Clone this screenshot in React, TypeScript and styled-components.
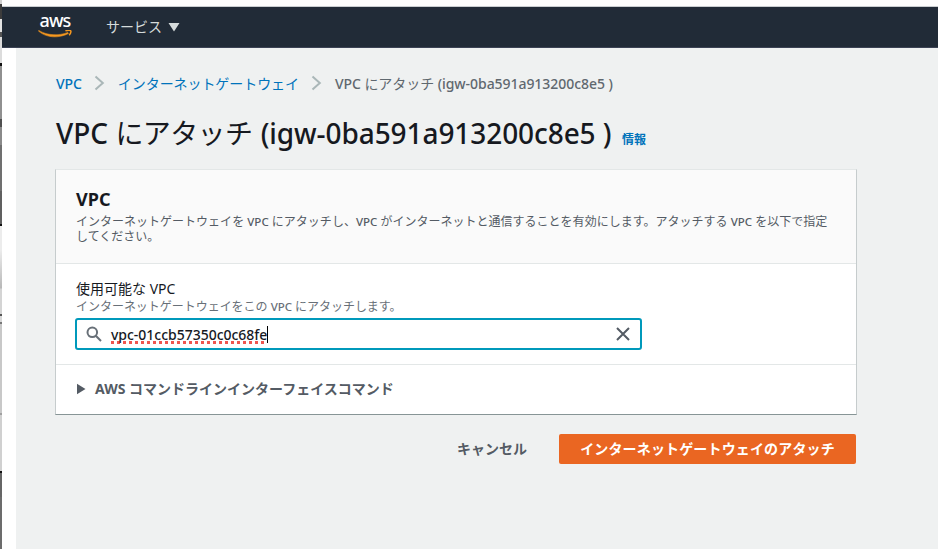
import React from "react";
import styled, { createGlobalStyle } from "styled-components";

const GlobalStyle = createGlobalStyle`
  * { box-sizing: border-box; }
  body {
    margin: 0;
    overflow: hidden;
    background: #ffffff;
    font-family: "Noto Sans", "Noto Sans CJK JP", sans-serif;
    font-size: 14px;
    color: #16191f;
  }
`;

const Screen = styled.div`
  display: grid;
  grid-template-columns: 2px 1fr;
  width: 938px;
  height: 549px;
  overflow: hidden;
`;

const WindowEdge = styled.div`
  background: linear-gradient(
    to bottom,
    #d0d0d0 0 4px, #3c3c3c 4px 19px, #e2e2e2 19px 32px, #555 32px 37px,
    #dcdcdc 37px 63px, #111 63px 66px, #909090 66px 119px, #505050 119px 127px,
    #8a8a8a 127px 145px, #707070 145px 191px, #606060 191px 224px, #111 224px 226px,
    #ececec 226px 250px, #b8b8b8 288px, #d4d4d4 289px 314px, #555 314px 316px,
    #d8d8d8 316px 322px, #777 322px 324px, #c8c8c8 324px 413px, #a0a0a0 413px 415px,
    #d0d0d0 415px 471px, #111 471px 473px, #666 473px 497px, #6c6c6c 497px 549px
  );
`;

const Browser = styled.div`
  display: flex;
  flex-direction: column;
  min-width: 0;
  border-top: 6px solid #fdfdfd;
`;

const NavBar = styled.header`
  display: flex;
  flex: none;
  align-items: center;
  height: 42px;
  padding-left: 36px;
  background: #212b37;
  border-top: 1px solid #c9cdd0;
  border-bottom: 1px solid #3c4355;
`;

const Brand = styled.div`
  display: flex;
  flex-direction: column;
  align-items: center;
  width: 34px;
  height: 26px;
`;

const BrandName = styled.span`
  font-size: 18px;
  font-weight: 500;
  line-height: 12px;
  height: 16px;
  letter-spacing: -0.9px;
  color: #ffffff;
`;

const ServiceMenu = styled.div`
  display: flex;
  align-items: center;
  gap: 6px;
  margin-left: 34px;
  padding-bottom: 1px;
  color: #d5dbdb;
  line-height: 20px;
`;

const Page = styled.main`
  flex: 1;
  margin-left: 14px;
  padding: 25px 0 0 40px;
  background: #eff1f1;
`;

const Column = styled.div`
  display: flex;
  flex-direction: column;
  width: 800px;
`;

const Crumbs = styled.nav`
  display: flex;
  align-items: center;
  height: 20px;
  white-space: nowrap;
  font-weight: 500;
`;

const Crumb = styled.span<{ $link?: boolean }>`
  color: ${(p) => (p.$link ? "#0073bb" : "#5f686f")};
  letter-spacing: ${(p) => (p.$link ? "-0.07px" : "-0.05px")};
`;

const Kana = styled.span<{ $track?: number }>`
  font-family: "Noto Sans CJK JP", sans-serif;
  font-weight: 400;
  letter-spacing: ${(p) => p.$track ?? -0.07}px;
`;

const Separator = styled.svg`
  flex: none;
  margin: 0 13px 0 12px;
`;

const TitleRow = styled.div`
  display: flex;
  align-items: baseline;
  height: 40px;
  margin-top: 19px;
  white-space: nowrap;
`;

const Title = styled.h1`
  margin: 0;
  font-size: 28px;
  font-weight: 500;
  line-height: 40px;
`;

const GatewayId = styled.span`
  margin-left: 1px;
  letter-spacing: -0.08px;
`;

const InfoLink = styled.a`
  margin-left: 10.5px;
  font-size: 12px;
  font-weight: 700;
  color: #0073bb;
`;

const Card = styled.section`
  display: flex;
  flex-direction: column;
  height: 246px;
  margin-top: 17px;
  margin-left: -1px;
  width: 802px;
  background: #ffffff;
  border: 1px solid #c6cccd;
  border-top-color: #e3e7e7;
  border-bottom-color: #879596;
`;

const CardHeader = styled.div`
  height: 94px;
  padding: 17px 20px 0;
  background: #fafafa;
  border-bottom: 1px solid #e3e7e7;
`;

const CardTitle = styled.h2`
  margin: 0;
  font-size: 18px;
  font-weight: 700;
  line-height: 24px;
`;

const Description = styled.p<{ $muted?: boolean }>`
  margin: ${(p) => (p.$muted ? "0" : "3px 0 0")};
  font-size: 12px;
  line-height: 15px;
  letter-spacing: ${(p) => (p.$muted ? "-0.03px" : "0.01px")};
  white-space: nowrap;
  color: ${(p) => (p.$muted ? "#687078" : "#545b64")};
`;

const SmallLatin = styled.span`
  font-size: 11.5px;
  font-weight: 500;
`;

const Field = styled.div`
  height: 101px;
  padding: 15px 19px 0;
  border-bottom: 1px solid #e3e7e7;
`;

const FieldText = styled.div`
  padding-left: 1px;
`;

const FieldLabel = styled.div`
  line-height: 20px;
`;

const SearchBox = styled.div`
  display: flex;
  align-items: center;
  width: 567px;
  height: 32px;
  margin-top: 4px;
  padding: 0 9px;
  background: #ffffff;
  border: 2px solid #0099bb;
  border-radius: 3px;
`;

const SearchValue = styled.span`
  margin-left: 9px;
  padding-top: 1px;
  line-height: 20px;
  font-weight: 500;
  letter-spacing: -0.02px;
  text-decoration: underline dotted #f0564f 2.5px;
  text-underline-offset: 1px;
  text-decoration-skip-ink: none;
`;

const Caret = styled.span`
  width: 1px;
  height: 17px;
  margin-right: auto;
  background: #000000;
`;

const Expander = styled.div`
  display: flex;
  align-items: center;
  gap: 9px;
  height: 48px;
  padding-left: 21px;
  color: #545b64;
  font-weight: 700;
`;

const ExpanderLabel = styled.span`
  padding-bottom: 2px;
`;

const Actions = styled.div`
  display: flex;
  justify-content: flex-end;
  align-items: center;
  gap: 32px;
  margin-top: 19px;
`;

const Button = styled.button<{ $primary?: boolean }>`
  height: 30px;
  width: ${(p) => (p.$primary ? "297px" : "auto")};
  padding: 0 0 2px;
  border: 0;
  border-radius: 2px;
  background: ${(p) => (p.$primary ? "#ea6622" : "transparent")};
  color: ${(p) => (p.$primary ? "#ffffff" : "#545b64")};
  font: 700 14px "Noto Sans", "Noto Sans CJK JP", sans-serif;
  letter-spacing: ${(p) => (p.$primary ? "0.15px" : "0")};
  white-space: nowrap;
`;

const Chevron = () => (
  <Separator width="11" height="16" viewBox="0 0 11 16" fill="none">
    <path d="M1.5 1.5 L8.8 8 L1.5 14.5" stroke="#aab7b8" strokeWidth="2" />
  </Separator>
);

export default function App() {
  return (
    <>
      <GlobalStyle />
      <Screen>
        <WindowEdge />
        <Browser>
          <NavBar>
            <Brand>
              <BrandName>aws</BrandName>
              <svg width="34" height="8" viewBox="0 0 34 8" fill="none">
                <path d="M0.8 0.4 C9 5.6 21 6 29.8 2.4 L30.4 3.6 C21 8.4 8.5 8.2 0.4 1.1 Z" fill="#f7981f" stroke="#f7981f" strokeWidth=".5" />
                <path d="M27.4 .9 C29.5 .2 32.2 .2 32.7 .8 C33.2 1.7 32.2 4 31.2 5.2" stroke="#f7981f" strokeWidth="1.5" />
              </svg>
            </Brand>
            <ServiceMenu>
              サービス
              <svg width="12" height="10" viewBox="0 0 12 10">
                <path d="M.5 1 H11.5 L6 9.5 Z" fill="#d5dbdb" />
              </svg>
            </ServiceMenu>
          </NavBar>
          <Page>
            <Column>
              <Crumbs>
                <Crumb $link>VPC</Crumb>
                <Chevron />
                <Crumb $link><Kana>インターネットゲートウェイ</Kana></Crumb>
                <Chevron />
                <Crumb>VPC <Kana>にアタッチ</Kana> (igw-0ba591a913200c8e5 )</Crumb>
              </Crumbs>
              <TitleRow>
                <Title>
                  VPC <Kana $track={-0.6}>にアタッチ</Kana>{" "}
                  <GatewayId>(igw-0ba591a913200c8e5 )</GatewayId>
                </Title>
                <InfoLink>情報</InfoLink>
              </TitleRow>
              <Card>
                <CardHeader>
                  <CardTitle>VPC</CardTitle>
                  <Description>
                    インターネットゲートウェイを <SmallLatin>VPC</SmallLatin> にアタッチし、<SmallLatin>VPC</SmallLatin> がインターネットと通信することを有効にします。アタッチする <SmallLatin>VPC</SmallLatin> を以下で指定
                    <br />
                    してください。
                  </Description>
                </CardHeader>
                <Field>
                  <FieldText>
                    <FieldLabel>使用可能な VPC</FieldLabel>
                    <Description $muted>
                      インターネットゲートウェイをこの <SmallLatin>VPC</SmallLatin> にアタッチします。
                    </Description>
                  </FieldText>
                  <SearchBox>
                    <svg width="16" height="16" viewBox="0 0 16 16" fill="none" stroke="#687078" strokeWidth="2">
                      <circle cx="6.3" cy="6.3" r="4.8" />
                      <path d="M9.8 9.8 L15 15" />
                    </svg>
                    <SearchValue>vpc-01ccb57350c0c68fe</SearchValue>
                    <Caret />
                    <svg width="16" height="16" viewBox="0 0 16 16" fill="none" stroke="#545b64" strokeWidth="2">
                      <path d="M2 2 L14 14 M14 2 L2 14" />
                    </svg>
                  </SearchBox>
                </Field>
                <Expander>
                  <svg width="9" height="12" viewBox="0 0 9 12">
                    <path d="M0 .8 L8.5 6 L0 11.2 Z" fill="#545b64" />
                  </svg>
                  <ExpanderLabel>AWS コマンドラインインターフェイスコマンド</ExpanderLabel>
                </Expander>
              </Card>
              <Actions>
                <Button>キャンセル</Button>
                <Button $primary>インターネットゲートウェイのアタッチ</Button>
              </Actions>
            </Column>
          </Page>
        </Browser>
      </Screen>
    </>
  );
}
